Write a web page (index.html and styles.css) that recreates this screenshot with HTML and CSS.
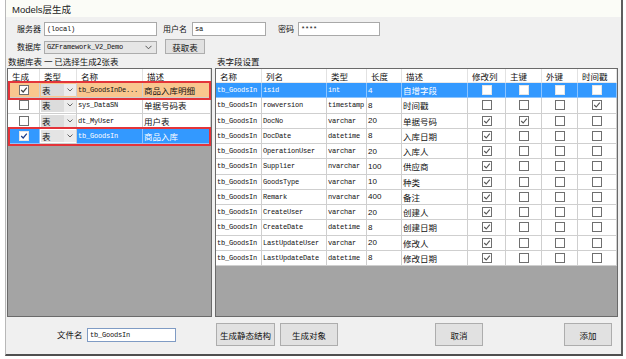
FILE: index.html
```html
<!DOCTYPE html>
<html>
<head>
<meta charset="utf-8">
<link rel="stylesheet" href="styles.css">
</head>
<body>
<div class="desk">
  <div class="window">
    <div class="titlebar">Models层生成</div>
    <div class="content">
      <div class="form-row r1">
        <span class="lbl l-server">服务器</span>
        <div class="input w-server">(local)</div>
        <span class="lbl l-user">用户名</span>
        <div class="input w-user">sa</div>
        <span class="lbl l-pwd">密码</span>
        <div class="input w-pwd">****</div>
      </div>
      <div class="form-row r2">
        <span class="lbl l-server">数据库</span>
        <div class="dbcombo">
          <span class="dbtext">GZFramework_V2_Demo</span>
          <svg class="chev" width="7" height="5" viewBox="0 0 7 5"><path d="M0.5 0.8 L3.5 3.8 L6.5 0.8" fill="none" stroke="#555" stroke-width="1"/></svg>
        </div>
        <div class="btn b-fetch">获取表</div>
      </div>
      <div class="sections">
        <div class="sec-left">数据库表 一 已选择生成2张表</div>
        <div class="sec-right">表字段设置</div>
      </div>
      <div class="grids">
        <div class="grid gl">
          <div class="row hdr">
            <div class="cell">生成</div><div class="cell">类型</div><div class="cell">名称</div><div class="cell">描述</div>
          </div>
          <div class="row hl mark">
            <div class="cell cc"><span class="cb"><svg width="8" height="8" viewBox="0 0 8 8"><path d="M1.2 4 L3.2 6 L6.8 1.6" fill="none" stroke="#444" stroke-width="1.2"/></svg></span></div>
            <div class="cell combo-cell"><div class="cmb"><span>表</span><span class="arr"><svg width="6" height="4" viewBox="0 0 6 4"><path d="M0.5 0.5 L3 3 L5.5 0.5" fill="none" stroke="#666" stroke-width="1"/></svg></span></div></div>
            <div class="cell m">tb_GoodsInDe...</div>
            <div class="cell c">商品入库明细</div>
          </div>
          <div class="row">
            <div class="cell cc"><span class="cb"></span></div>
            <div class="cell combo-cell"><div class="cmb"><span>表</span><span class="arr"><svg width="6" height="4" viewBox="0 0 6 4"><path d="M0.5 0.5 L3 3 L5.5 0.5" fill="none" stroke="#666" stroke-width="1"/></svg></span></div></div>
            <div class="cell m">sys_DataSN</div>
            <div class="cell c">单据号码表</div>
          </div>
          <div class="row">
            <div class="cell cc"><span class="cb"></span></div>
            <div class="cell combo-cell"><div class="cmb"><span>表</span><span class="arr"><svg width="6" height="4" viewBox="0 0 6 4"><path d="M0.5 0.5 L3 3 L5.5 0.5" fill="none" stroke="#666" stroke-width="1"/></svg></span></div></div>
            <div class="cell m">dt_MyUser</div>
            <div class="cell c">用户表</div>
          </div>
          <div class="row mark">
            <div class="cell cc sel"><span class="cb"><svg width="8" height="8" viewBox="0 0 8 8"><path d="M1.2 4 L3.2 6 L6.8 1.6" fill="none" stroke="#1a3d8a" stroke-width="1.2"/></svg></span></div>
            <div class="cell combo-cell"><div class="cmb light"><span>表</span><span class="arr"><svg width="6" height="4" viewBox="0 0 6 4"><path d="M0.5 0.5 L3 3 L5.5 0.5" fill="none" stroke="#666" stroke-width="1"/></svg></span></div></div>
            <div class="cell m sel">tb_GoodsIn</div>
            <div class="cell c sel">商品入库</div>
          </div>
        </div>
        <div class="grid gr">
          <div class="row hdr">
            <div class="cell">名称</div><div class="cell">列名</div><div class="cell">类型</div><div class="cell">长度</div><div class="cell">描述</div><div class="cell">修改列</div><div class="cell">主键</div><div class="cell">外键</div><div class="cell">时间戳</div>
          </div>
          <div class="row sel">
            <div class="cell m">tb_GoodsIn</div><div class="cell m">isid</div><div class="cell m">int</div><div class="cell n">4</div><div class="cell c">自增字段</div>
            <div class="cell cc"><span class="cb"></span></div><div class="cell cc"><span class="cb"></span></div><div class="cell cc"><span class="cb"></span></div><div class="cell cc"><span class="cb"></span></div>
          </div>
          <div class="row">
            <div class="cell m">tb_GoodsIn</div><div class="cell m">rowversion</div><div class="cell m">timestamp</div><div class="cell n">8</div><div class="cell c">时间戳</div>
            <div class="cell cc"><span class="cb"></span></div><div class="cell cc"><span class="cb"></span></div><div class="cell cc"><span class="cb"></span></div><div class="cell cc"><span class="cb"><svg width="8" height="8" viewBox="0 0 8 8"><path d="M1.2 4 L3.2 6 L6.8 1.6" fill="none" stroke="#555" stroke-width="1.1"/></svg></span></div>
          </div>
          <div class="row">
            <div class="cell m">tb_GoodsIn</div><div class="cell m">DocNo</div><div class="cell m">varchar</div><div class="cell n">20</div><div class="cell c">单据号码</div>
            <div class="cell cc"><span class="cb"><svg width="8" height="8" viewBox="0 0 8 8"><path d="M1.2 4 L3.2 6 L6.8 1.6" fill="none" stroke="#555" stroke-width="1.1"/></svg></span></div><div class="cell cc"><span class="cb"><svg width="8" height="8" viewBox="0 0 8 8"><path d="M1.2 4 L3.2 6 L6.8 1.6" fill="none" stroke="#555" stroke-width="1.1"/></svg></span></div><div class="cell cc"><span class="cb"></span></div><div class="cell cc"><span class="cb"></span></div>
          </div>
          <div class="row">
            <div class="cell m">tb_GoodsIn</div><div class="cell m">DocDate</div><div class="cell m">datetime</div><div class="cell n">8</div><div class="cell c">入库日期</div>
            <div class="cell cc"><span class="cb"><svg width="8" height="8" viewBox="0 0 8 8"><path d="M1.2 4 L3.2 6 L6.8 1.6" fill="none" stroke="#555" stroke-width="1.1"/></svg></span></div><div class="cell cc"><span class="cb"></span></div><div class="cell cc"><span class="cb"></span></div><div class="cell cc"><span class="cb"></span></div>
          </div>
          <div class="row">
            <div class="cell m">tb_GoodsIn</div><div class="cell m">OperationUser</div><div class="cell m">varchar</div><div class="cell n">20</div><div class="cell c">入库人</div>
            <div class="cell cc"><span class="cb"><svg width="8" height="8" viewBox="0 0 8 8"><path d="M1.2 4 L3.2 6 L6.8 1.6" fill="none" stroke="#555" stroke-width="1.1"/></svg></span></div><div class="cell cc"><span class="cb"></span></div><div class="cell cc"><span class="cb"></span></div><div class="cell cc"><span class="cb"></span></div>
          </div>
          <div class="row">
            <div class="cell m">tb_GoodsIn</div><div class="cell m">Supplier</div><div class="cell m">nvarchar</div><div class="cell n">100</div><div class="cell c">供应商</div>
            <div class="cell cc"><span class="cb"><svg width="8" height="8" viewBox="0 0 8 8"><path d="M1.2 4 L3.2 6 L6.8 1.6" fill="none" stroke="#555" stroke-width="1.1"/></svg></span></div><div class="cell cc"><span class="cb"></span></div><div class="cell cc"><span class="cb"></span></div><div class="cell cc"><span class="cb"></span></div>
          </div>
          <div class="row">
            <div class="cell m">tb_GoodsIn</div><div class="cell m">GoodsType</div><div class="cell m">varchar</div><div class="cell n">10</div><div class="cell c">种类</div>
            <div class="cell cc"><span class="cb"><svg width="8" height="8" viewBox="0 0 8 8"><path d="M1.2 4 L3.2 6 L6.8 1.6" fill="none" stroke="#555" stroke-width="1.1"/></svg></span></div><div class="cell cc"><span class="cb"></span></div><div class="cell cc"><span class="cb"></span></div><div class="cell cc"><span class="cb"></span></div>
          </div>
          <div class="row">
            <div class="cell m">tb_GoodsIn</div><div class="cell m">Remark</div><div class="cell m">nvarchar</div><div class="cell n">400</div><div class="cell c">备注</div>
            <div class="cell cc"><span class="cb"><svg width="8" height="8" viewBox="0 0 8 8"><path d="M1.2 4 L3.2 6 L6.8 1.6" fill="none" stroke="#555" stroke-width="1.1"/></svg></span></div><div class="cell cc"><span class="cb"></span></div><div class="cell cc"><span class="cb"></span></div><div class="cell cc"><span class="cb"></span></div>
          </div>
          <div class="row">
            <div class="cell m">tb_GoodsIn</div><div class="cell m">CreateUser</div><div class="cell m">varchar</div><div class="cell n">20</div><div class="cell c">创建人</div>
            <div class="cell cc"><span class="cb"><svg width="8" height="8" viewBox="0 0 8 8"><path d="M1.2 4 L3.2 6 L6.8 1.6" fill="none" stroke="#555" stroke-width="1.1"/></svg></span></div><div class="cell cc"><span class="cb"></span></div><div class="cell cc"><span class="cb"></span></div><div class="cell cc"><span class="cb"></span></div>
          </div>
          <div class="row">
            <div class="cell m">tb_GoodsIn</div><div class="cell m">CreateDate</div><div class="cell m">datetime</div><div class="cell n">8</div><div class="cell c">创建日期</div>
            <div class="cell cc"><span class="cb"><svg width="8" height="8" viewBox="0 0 8 8"><path d="M1.2 4 L3.2 6 L6.8 1.6" fill="none" stroke="#555" stroke-width="1.1"/></svg></span></div><div class="cell cc"><span class="cb"></span></div><div class="cell cc"><span class="cb"></span></div><div class="cell cc"><span class="cb"></span></div>
          </div>
          <div class="row">
            <div class="cell m">tb_GoodsIn</div><div class="cell m">LastUpdateUser</div><div class="cell m">varchar</div><div class="cell n">20</div><div class="cell c">修改人</div>
            <div class="cell cc"><span class="cb"><svg width="8" height="8" viewBox="0 0 8 8"><path d="M1.2 4 L3.2 6 L6.8 1.6" fill="none" stroke="#555" stroke-width="1.1"/></svg></span></div><div class="cell cc"><span class="cb"></span></div><div class="cell cc"><span class="cb"></span></div><div class="cell cc"><span class="cb"></span></div>
          </div>
          <div class="row">
            <div class="cell m">tb_GoodsIn</div><div class="cell m">LastUpdateDate</div><div class="cell m">datetime</div><div class="cell n">8</div><div class="cell c">修改日期</div>
            <div class="cell cc"><span class="cb"><svg width="8" height="8" viewBox="0 0 8 8"><path d="M1.2 4 L3.2 6 L6.8 1.6" fill="none" stroke="#555" stroke-width="1.1"/></svg></span></div><div class="cell cc"><span class="cb"></span></div><div class="cell cc"><span class="cb"></span></div><div class="cell cc"><span class="cb"></span></div>
          </div>
        </div>
      </div>
      <div class="bottom">
        <span class="lbl l-file">文件名</span>
        <div class="input w-file">tb_GoodsIn</div>
        <div class="btn b1">生成静态结构</div>
        <div class="btn b2">生成对象</div>
        <div class="btn b3">取消</div>
        <div class="btn b4">添加</div>
      </div>
    </div>
  </div>
</div>
</body>
</html>
```
FILE: styles.css
```css
* { box-sizing: border-box; }
body { margin: 0; background: #fff; font-family: "Noto Sans CJK SC", "Liberation Sans", sans-serif; color: #111; }
.desk { width: 626px; height: 359px; background: #fff; display: flex; overflow: hidden; }
.window {
  margin-left: 5px; width: 618px; height: 356px;
  border-left: 1px solid #b8b8b8; border-right: 2px solid #5d5d5d; border-bottom: 2px solid #4f4f4f;
  display: flex; flex-direction: column; background: #f0f0f0;
}
.titlebar {
  height: 17px; background: #fbfcf7; display: flex; align-items: center; padding-left: 6px;
  font: 9.5px "Liberation Sans", "Noto Sans CJK SC", sans-serif; color: #222;
}
.content { flex: 1; padding: 5px 3px 0 1px; display: flex; flex-direction: column; }
.form-row { display: flex; align-items: center; height: 14px; }
.r2 { margin-top: 3px; height: 15px; }
.lbl { font-size: 8px; line-height: 14px; white-space: nowrap; color: #111; }
.l-server { margin-left: 10px; width: 27px; }
.l-user { margin-left: 6px; width: 29px; }
.l-pwd { margin-left: 12px; width: 20px; }
.input {
  height: 14px; background: #fff; border: 1px solid #a9a9a9;
  font: 7px/12px "Liberation Mono", monospace; letter-spacing: -0.2px; padding-left: 2px; color: #111;
}
.w-server { width: 113px; }
.w-user { width: 74px; }
.w-pwd { width: 82px; }
.dbcombo {
  width: 113px; height: 13px; margin-top: 1px; background: #e6e6e6; border: 1px solid #acacac;
  display: flex; align-items: center; justify-content: space-between; padding: 0 4px 0 2px;
}
.dbtext { font: 7px "Liberation Mono", monospace; letter-spacing: -0.2px; }
.btn {
  background: #e1e1e1; border: 1px solid #adadad; font-size: 8.5px;
  display: flex; align-items: center; justify-content: center; white-space: nowrap; color: #111;
}
.b-fetch { margin-left: 8px; width: 40px; height: 15px; }
.sections { display: flex; height: 14px; font-size: 8.5px; line-height: 14px; }
.sec-left { width: 208px; padding-left: 1px; }
.sec-right { padding-left: 2px; }
.grids { display: flex; gap: 3px; height: 249px; }
.grid { border: 1px solid #6a6a6a; background: #a4a4a4; display: flex; flex-direction: column; }
.gl { width: 205px; }
.gr { width: 403px; }
.row { display: grid; height: 15.25px; background: #fff; flex: none; }
.gl .row { grid-template-columns: 32px 37px 66px 68px; }
.gr .row { grid-template-columns: 46px 65px 40px 35px 66px 38px 36px 36px 39px; }
.row.hdr { height: 14px; }
.cell {
  border-right: 1px solid #cfcfcf; border-bottom: 1px solid #cfcfcf;
  display: flex; align-items: center; overflow: hidden; white-space: nowrap;
  padding-left: 1px; font-size: 8.5px;
}
.hdr .cell { border-bottom: 1px solid #e8e8e8; border-right: 1px solid #e2e2e2; padding-left: 4px; font-size: 8.5px; }
.m { font: 7px "Liberation Mono", monospace; letter-spacing: -0.2px; }
.n { font: 8px "Liberation Sans", sans-serif; }
.c { font-size: 8.5px; }
.cc { justify-content: center; padding-left: 0; }
.cb {
  width: 10px; height: 10px; border: 1px solid #6f6f6f; background: #fff;
  display: flex; align-items: center; justify-content: center;
}
.sel { background: #3399ff; color: #fff; }
.row.sel .cell, .cell.sel { border-right-color: #8cc4ff; border-bottom-color: #8cc4ff; }
.sel .cb { border-color: #e6e6e6; }
.hl { background: #f9c68e; }
.mark { position: relative; }
.mark::after {
  content: ""; position: absolute; left: 0; right: 0; top: -2px; bottom: -2px;
  border: 2px solid #e3343a; pointer-events: none; z-index: 2;
}
.combo-cell { padding: 1px 0 1px 1px; }
.cmb {
  flex: 1; height: 100%; background: #dcdcdc; display: flex; align-items: center;
  justify-content: space-between; padding-left: 1px; font-size: 8.5px; color: #111;
}
.cmb.light { background: #e4e4e4; }
.arr { width: 12px; height: 100%; background: #ececec; display: flex; align-items: center; justify-content: center; }
.bottom { flex: 1; display: flex; align-items: flex-start; padding-top: 6px; }
.bottom .lbl { line-height: 23px; font-size: 8.5px; }
.l-file { margin-left: 50px; width: 30px; }
.w-file { margin-top: 5px; width: 89px; border-color: #7f9bc4; }
.bottom .btn { height: 23px; }
.b1 { margin-left: 40px; width: 59px; }
.b2 { margin-left: 5px; width: 58px; }
.b3 { margin-left: 97px; width: 48px; }
.b4 { margin-left: 81px; width: 48px; }
```
